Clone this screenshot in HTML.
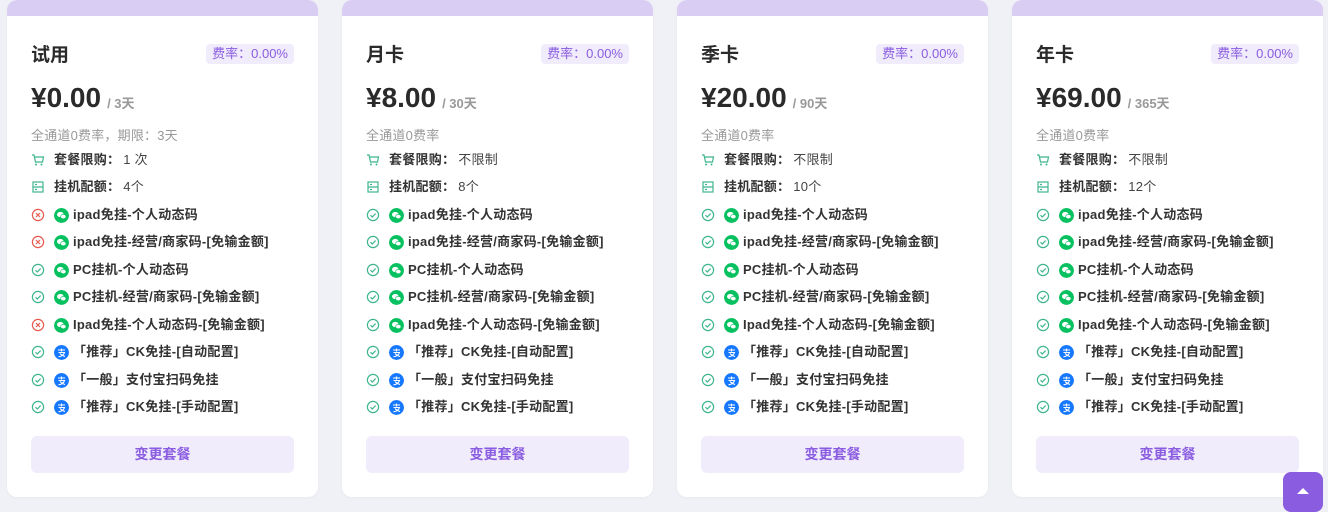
<!DOCTYPE html>
<html><head><meta charset="utf-8"><style>
*{margin:0;padding:0;box-sizing:border-box}
body{width:1328px;height:504px;background:#f0f1f6;font-family:"Liberation Sans","Noto Sans CJK SC",sans-serif;position:relative;overflow:hidden;color:#333}
.card{position:absolute;top:0;width:311px;height:497px;background:#fff;border-radius:10px;overflow:hidden;box-shadow:0 1px 3px rgba(0,0,0,.04)}
.band{position:absolute;left:0;top:0;right:0;height:16px;background:#d9cdf3}
.title{position:absolute;left:24px;top:40px;font-size:19px;font-weight:bold;color:#2a2a2a}
.badge{position:absolute;right:24px;top:44px;height:20px;line-height:20px;padding:0 6px;background:#f0ecfc;color:#8a5ce0;font-size:13px;border-radius:4px}
.price{position:absolute;left:24px;top:82px;font-size:28px;font-weight:bold;color:#2a2a2a;white-space:nowrap}
.price small{font-size:13px;color:#999;font-weight:bold;margin-left:6px;position:relative;top:1px}
.desc{position:absolute;left:24px;top:125px;font-size:13px;color:#999;letter-spacing:.2px}
.row{position:absolute;left:24px;height:18px;line-height:18px;font-size:13px;white-space:nowrap;display:flex;align-items:center;letter-spacing:.25px}
.row b{font-weight:bold;color:#333}
.row .v{color:#444;margin-left:3px}
.st{width:14px;height:14px;margin-right:9px;flex:none}
.br{width:15px;height:15px;border-radius:50%;margin-right:4px;flex:none;display:inline-block;position:relative}
.btn{position:absolute;left:24px;right:24px;top:436px;height:37px;background:#f0ecfc;border-radius:6px;color:#8a5ce0;font-size:14px;font-weight:bold;text-align:center;line-height:37px}
.top{position:absolute;left:1283px;top:472px;width:40px;height:40px;background:#8a5ce0;border-radius:8px}
.top:after{content:"";position:absolute;left:14px;top:16px;border-left:6px solid transparent;border-right:6px solid transparent;border-bottom:6px solid #fff}
</style></head><body>
<svg width="0" height="0" style="position:absolute">
<defs>
<symbol id="ok" viewBox="0 0 14 14"><circle cx="7" cy="7" r="5.6" fill="none" stroke="#3fb58f" stroke-width="1.2"/><path d="M4.5 7.2l1.8 1.8 3.3-3.4" fill="none" stroke="#3fb58f" stroke-width="1.2"/></symbol>
<symbol id="no" viewBox="0 0 14 14"><circle cx="7" cy="7" r="5.6" fill="none" stroke="#e8594f" stroke-width="1.2"/><path d="M5 5l4 4M9 5l-4 4" fill="none" stroke="#e8594f" stroke-width="1.2"/></symbol>
<symbol id="cart" viewBox="0 0 14 14"><path d="M1 2h2l1.5 7h7l1-5H4" fill="none" stroke="#3fb58f" stroke-width="1.2"/><circle cx="5" cy="11.5" r="1" fill="#3fb58f"/><circle cx="10.5" cy="11.5" r="1" fill="#3fb58f"/></symbol>
<symbol id="srv" viewBox="0 0 14 14"><rect x="2" y="2" width="10" height="10" fill="none" stroke="#3fb58f" stroke-width="1.2"/><path d="M2 7h10M4 4.5h2M4 9.5h2" stroke="#3fb58f" stroke-width="1.2"/></symbol>
<symbol id="wxi" viewBox="0 0 15 15"><circle cx="7.5" cy="7.5" r="7.5" fill="#07c160"/><ellipse cx="6.3" cy="6.5" rx="3.3" ry="2.6" fill="#fff"/><ellipse cx="9.3" cy="8.6" rx="2.7" ry="2.2" fill="#fff" stroke="#07c160" stroke-width=".6"/></symbol>
<symbol id="ali" viewBox="0 0 15 15"><circle cx="7.5" cy="7.5" r="7.5" fill="#1677ff"/><path d="M4 5h7M7.5 3.5v3M4.5 7.5h6c-1 3-3.5 4-6 4.3M6 8.5c1.5 1.5 3 2.5 5 3" fill="none" stroke="#fff" stroke-width="1.1"/></symbol>
</defs></svg>

<div class="card" style="left:7px"><div class="band"></div>
<div class="title">试用</div><div class="badge">费率：0.00%</div>
<div class="price">¥0.00<small>/ 3天</small></div>
<div class="desc">全通道0费率，期限：3天</div>
<div class="row" style="top:151px"><svg class="st"><use href="#cart"/></svg><b>套餐限购：</b><span class="v">1 次</span></div>
<div class="row" style="top:178px"><svg class="st"><use href="#srv"/></svg><b>挂机配额：</b><span class="v">4个</span></div>
<div class="row" style="top:206px"><svg class="st"><use href="#no"/></svg><svg class="br"><use href="#wxi"/></svg><b>ipad免挂-个人动态码</b></div>
<div class="row" style="top:233px"><svg class="st"><use href="#no"/></svg><svg class="br"><use href="#wxi"/></svg><b>ipad免挂-经营/商家码-[免输金额]</b></div>
<div class="row" style="top:261px"><svg class="st"><use href="#ok"/></svg><svg class="br"><use href="#wxi"/></svg><b>PC挂机-个人动态码</b></div>
<div class="row" style="top:288px"><svg class="st"><use href="#ok"/></svg><svg class="br"><use href="#wxi"/></svg><b>PC挂机-经营/商家码-[免输金额]</b></div>
<div class="row" style="top:316px"><svg class="st"><use href="#no"/></svg><svg class="br"><use href="#wxi"/></svg><b>Ipad免挂-个人动态码-[免输金额]</b></div>
<div class="row" style="top:343px"><svg class="st"><use href="#ok"/></svg><svg class="br"><use href="#ali"/></svg><b>「推荐」CK免挂-[自动配置]</b></div>
<div class="row" style="top:371px"><svg class="st"><use href="#ok"/></svg><svg class="br"><use href="#ali"/></svg><b>「一般」支付宝扫码免挂</b></div>
<div class="row" style="top:398px"><svg class="st"><use href="#ok"/></svg><svg class="br"><use href="#ali"/></svg><b>「推荐」CK免挂-[手动配置]</b></div>
<div class="btn">变更套餐</div></div>

<div class="card" style="left:342px"><div class="band"></div>
<div class="title">月卡</div><div class="badge">费率：0.00%</div>
<div class="price">¥8.00<small>/ 30天</small></div>
<div class="desc">全通道0费率</div>
<div class="row" style="top:151px"><svg class="st"><use href="#cart"/></svg><b>套餐限购：</b><span class="v">不限制</span></div>
<div class="row" style="top:178px"><svg class="st"><use href="#srv"/></svg><b>挂机配额：</b><span class="v">8个</span></div>
<div class="row" style="top:206px"><svg class="st"><use href="#ok"/></svg><svg class="br"><use href="#wxi"/></svg><b>ipad免挂-个人动态码</b></div>
<div class="row" style="top:233px"><svg class="st"><use href="#ok"/></svg><svg class="br"><use href="#wxi"/></svg><b>ipad免挂-经营/商家码-[免输金额]</b></div>
<div class="row" style="top:261px"><svg class="st"><use href="#ok"/></svg><svg class="br"><use href="#wxi"/></svg><b>PC挂机-个人动态码</b></div>
<div class="row" style="top:288px"><svg class="st"><use href="#ok"/></svg><svg class="br"><use href="#wxi"/></svg><b>PC挂机-经营/商家码-[免输金额]</b></div>
<div class="row" style="top:316px"><svg class="st"><use href="#ok"/></svg><svg class="br"><use href="#wxi"/></svg><b>Ipad免挂-个人动态码-[免输金额]</b></div>
<div class="row" style="top:343px"><svg class="st"><use href="#ok"/></svg><svg class="br"><use href="#ali"/></svg><b>「推荐」CK免挂-[自动配置]</b></div>
<div class="row" style="top:371px"><svg class="st"><use href="#ok"/></svg><svg class="br"><use href="#ali"/></svg><b>「一般」支付宝扫码免挂</b></div>
<div class="row" style="top:398px"><svg class="st"><use href="#ok"/></svg><svg class="br"><use href="#ali"/></svg><b>「推荐」CK免挂-[手动配置]</b></div>
<div class="btn">变更套餐</div></div>

<div class="card" style="left:677px"><div class="band"></div>
<div class="title">季卡</div><div class="badge">费率：0.00%</div>
<div class="price">¥20.00<small>/ 90天</small></div>
<div class="desc">全通道0费率</div>
<div class="row" style="top:151px"><svg class="st"><use href="#cart"/></svg><b>套餐限购：</b><span class="v">不限制</span></div>
<div class="row" style="top:178px"><svg class="st"><use href="#srv"/></svg><b>挂机配额：</b><span class="v">10个</span></div>
<div class="row" style="top:206px"><svg class="st"><use href="#ok"/></svg><svg class="br"><use href="#wxi"/></svg><b>ipad免挂-个人动态码</b></div>
<div class="row" style="top:233px"><svg class="st"><use href="#ok"/></svg><svg class="br"><use href="#wxi"/></svg><b>ipad免挂-经营/商家码-[免输金额]</b></div>
<div class="row" style="top:261px"><svg class="st"><use href="#ok"/></svg><svg class="br"><use href="#wxi"/></svg><b>PC挂机-个人动态码</b></div>
<div class="row" style="top:288px"><svg class="st"><use href="#ok"/></svg><svg class="br"><use href="#wxi"/></svg><b>PC挂机-经营/商家码-[免输金额]</b></div>
<div class="row" style="top:316px"><svg class="st"><use href="#ok"/></svg><svg class="br"><use href="#wxi"/></svg><b>Ipad免挂-个人动态码-[免输金额]</b></div>
<div class="row" style="top:343px"><svg class="st"><use href="#ok"/></svg><svg class="br"><use href="#ali"/></svg><b>「推荐」CK免挂-[自动配置]</b></div>
<div class="row" style="top:371px"><svg class="st"><use href="#ok"/></svg><svg class="br"><use href="#ali"/></svg><b>「一般」支付宝扫码免挂</b></div>
<div class="row" style="top:398px"><svg class="st"><use href="#ok"/></svg><svg class="br"><use href="#ali"/></svg><b>「推荐」CK免挂-[手动配置]</b></div>
<div class="btn">变更套餐</div></div>

<div class="card" style="left:1012px"><div class="band"></div>
<div class="title">年卡</div><div class="badge">费率：0.00%</div>
<div class="price">¥69.00<small>/ 365天</small></div>
<div class="desc">全通道0费率</div>
<div class="row" style="top:151px"><svg class="st"><use href="#cart"/></svg><b>套餐限购：</b><span class="v">不限制</span></div>
<div class="row" style="top:178px"><svg class="st"><use href="#srv"/></svg><b>挂机配额：</b><span class="v">12个</span></div>
<div class="row" style="top:206px"><svg class="st"><use href="#ok"/></svg><svg class="br"><use href="#wxi"/></svg><b>ipad免挂-个人动态码</b></div>
<div class="row" style="top:233px"><svg class="st"><use href="#ok"/></svg><svg class="br"><use href="#wxi"/></svg><b>ipad免挂-经营/商家码-[免输金额]</b></div>
<div class="row" style="top:261px"><svg class="st"><use href="#ok"/></svg><svg class="br"><use href="#wxi"/></svg><b>PC挂机-个人动态码</b></div>
<div class="row" style="top:288px"><svg class="st"><use href="#ok"/></svg><svg class="br"><use href="#wxi"/></svg><b>PC挂机-经营/商家码-[免输金额]</b></div>
<div class="row" style="top:316px"><svg class="st"><use href="#ok"/></svg><svg class="br"><use href="#wxi"/></svg><b>Ipad免挂-个人动态码-[免输金额]</b></div>
<div class="row" style="top:343px"><svg class="st"><use href="#ok"/></svg><svg class="br"><use href="#ali"/></svg><b>「推荐」CK免挂-[自动配置]</b></div>
<div class="row" style="top:371px"><svg class="st"><use href="#ok"/></svg><svg class="br"><use href="#ali"/></svg><b>「一般」支付宝扫码免挂</b></div>
<div class="row" style="top:398px"><svg class="st"><use href="#ok"/></svg><svg class="br"><use href="#ali"/></svg><b>「推荐」CK免挂-[手动配置]</b></div>
<div class="btn">变更套餐</div></div>

<div class="top"></div>
</body></html>
